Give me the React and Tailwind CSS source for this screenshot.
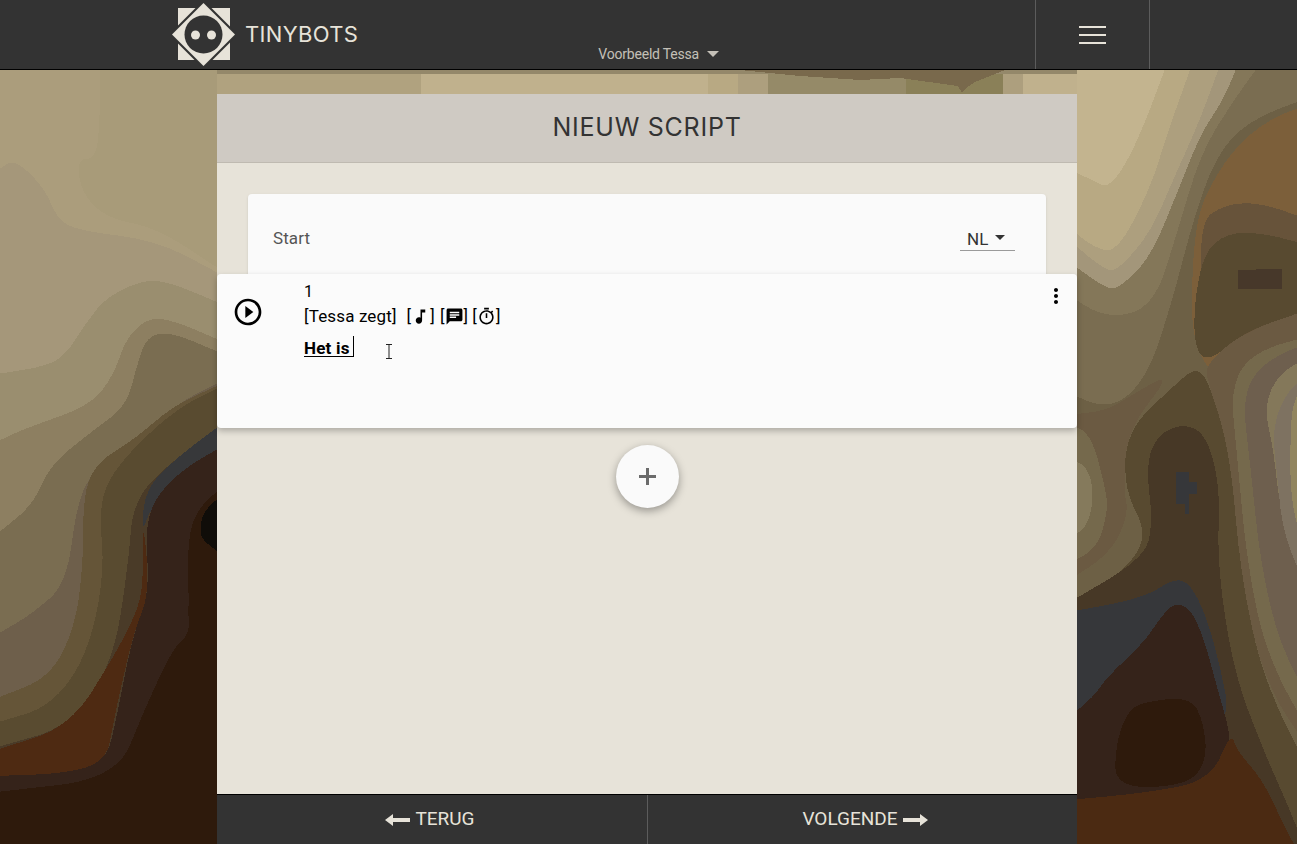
import React from 'react';

const leftLayers = [
    ['#ab9d7c', '0,0 300,0 300,90 290,180 230,180 245,250 320,300 470,320 651,400 651,1568 0,1568'],
    ['#a5977a', '0,200 45,180 135,240 170,300 230,325 470,345 651,410 651,1568 0,1568'],
    ['#9a8e6f', '0,615 140,600 200,575 260,510 320,460 430,425 510,430 651,470 651,1568 0,1568'],
    ['#8d7f61', '0,750 80,725 270,680 340,620 380,540 450,500 530,510 651,545 651,1568 0,1568'],
    ['#7a6d51', '0,935 100,880 150,800 280,730 380,680 410,600 440,540 510,530 651,570 651,1568 0,1568'],
    ['#6e5f4b', '0,1140 100,1100 200,1040 230,880 280,810 400,760 520,680 651,635 651,1568 0,1568'],
    ['#655538', '0,1270 150,1230 225,1130 250,1000 250,850 300,790 400,750 520,680 651,640 651,1568 0,1568'],
    ['#594b30', '0,1320 150,1290 260,1190 315,1020 295,880 350,800 520,690 651,645 651,1568 0,1568'],
    ['#4a3b28', '0,1370 210,1330 340,1200 385,1000 400,870 520,790 651,730 651,1568 0,1568'],
    ['#37383a', '425,940 435,850 530,785 700,700 700,750 530,825 450,890'],
    ['#4e2a12', '0,1375 210,1330 340,1190 410,1100 430,1040 428,900 450,1060 400,1140 340,1320 320,1400 200,1425 0,1430'],
    ['#35231a', '0,1430 200,1425 320,1400 350,1310 400,1140 450,1060 432,900 530,815 700,750 700,1568 0,1568'],
    ['#2e1a0c', '0,1462 350,1435 430,1300 520,1170 570,1140 560,950 600,880 700,830 700,1568 0,1568'],
    ['#35231a', '535,1130 565,1090 570,1140 520,1175'],
    ['#100d09', '598,940 610,890 700,845 700,998 620,960'],
];

const rightLayers = [
    ['#6d6045', '-40,-40 720,-40 720,1640 -40,1640'],
    ['#7c5f3a', '345,320 420,205 520,125 640,80 720,70 720,640 345,640'],
    ['#67533a', '360,310 450,270 560,270 720,310 720,520 390,590'],
    ['#584a30', '355,570 350,480 380,370 450,330 560,330 720,360 720,480 500,530 400,590'],
    ['#47382a', '483,405 615,403 615,443 483,443', true],
    ['#6b5a42', '380,600 500,530 720,480 720,1400 560,1240 490,1020 440,780 400,640'],
    ['#75694c', '460,640 530,570 720,535 720,1370 570,1190 510,1000 480,780'],
    ['#6e5f4e', '495,660 560,590 720,545 720,1300 610,1170 550,1000 520,800'],
    ['#84785a', '560,680 610,610 720,575 720,1080 610,900 590,770'],
    ['#7e7261', '585,720 640,640 720,610 720,1090 620,950 600,820'],
    ['#91855f', '640,700 660,660 720,650 720,1010 640,900'],
    ['#584a30', '-40,1085 100,1040 220,950 140,850 150,730 290,640 360,600 400,640 460,780 490,1020 560,1240 720,1450 720,1640 -40,1640'],
    ['#6b5a42', '-40,700 90,690 160,660 290,610 150,730 140,850 155,900 100,980 -40,1040'],
    ['#75694c', '-40,720 40,730 90,860 90,900 60,970 -40,1005'],
    ['#857a5c', '-40,785 30,800 52,860 30,930 -40,950'],
    ['#473826', '207,800 240,740 320,715 390,740 430,850 420,1000 470,1220 560,1380 640,1500 720,1640 -40,1640 -40,1085 200,990 228,920'],
    ['#36373a', '-40,1100 200,1070 290,1030 340,1040 390,1110 430,1210 462,1320 300,1400 -40,1310'],
    ['#35231a', '-40,1320 50,1270 90,1230 200,1160 250,1110 290,1080 340,1090 380,1150 420,1250 462,1350 450,1380 400,1440 200,1470 -40,1480'],
    ['#2e1a0c', '115,1370 150,1300 200,1280 340,1270 380,1320 390,1400 330,1450 115,1455'],
    ['#4b2a12', '-40,1480 200,1465 400,1440 462,1340 480,1380 560,1440 640,1560 720,1640 -40,1640'],
    ['#7a6d51', '-40,-40 720,-40 720,50 520,100 420,170 350,300 285,470 210,625 100,690 -40,650'],
    ['#847759', '-40,-40 580,-40 470,60 370,170 300,330 230,480 90,505 -40,450'],
    ['#a3967a', '-40,-40 500,-40 440,60 370,130 300,250 220,380 130,440 90,445 -40,380'],
    ['#ad9f7e', '-40,-40 445,-40 370,100 290,220 220,330 130,400 90,410 -40,335'],
    ['#b8a983', '-40,-40 360,-40 270,130 220,240 120,370 50,360 -40,310'],
    ['#c3b48f', '-40,-40 285,-40 180,150 100,240 50,225 -40,195'],
    ['#36373a', '297,815 335,815 335,835 360,835 360,858 335,858 335,900 325,900 325,880 297,880', true],
];

// rounds the outline through the edge midpoints, so contours stay soft;
// points on or past the canvas edge stay sharp so the corners are filled
const smooth = (points, sharp) => {
    const pts = points.trim().split(' ').map((p) => p.split(',').map(Number));
    if (sharp) return `M${pts.map((p) => p.join(' ')).join('L')}Z`;
    const mid = (a, b) => [(a[0] + b[0]) / 2, (a[1] + b[1]) / 2];
    let d = `M${mid(pts[pts.length - 1], pts[0]).join(' ')}`;
    pts.forEach((p, i) => {
        const m = mid(p, pts[(i + 1) % pts.length]);
        const edge = p[0] <= 0 || p[0] >= 651 || p[1] <= 0 || p[1] >= 1568;
        d += edge ? `L${p.join(' ')}L${m.join(' ')}` : `Q${p.join(' ')} ${m.join(' ')}`;
    });
    return d + 'Z';
};

// posterized backdrop behind the panel
const Backdrop = () => (
    <svg className="absolute inset-0 w-full h-full" viewBox="0 0 1297 774" preserveAspectRatio="none" shapeRendering="crispEdges">
        <rect width="1297" height="774" fill="#a89b79" />
        <g transform="scale(0.33333 0.4936)">
            {leftLayers.map(([fill, points, sharp], i) => <path key={i} fill={fill} d={smooth(points, sharp)} />)}
        </g>
        <g transform="translate(1077 0) scale(0.33333 0.4936)">
            {rightLayers.map(([fill, points, sharp], i) => <path key={i} fill={fill} d={smooth(points, sharp)} />)}
        </g>
        <rect x="217" y="0" width="204" height="24" fill="#b0a27f" />
        <rect x="421" y="0" width="287" height="24" fill="#c0b18d" />
        <rect x="708" y="0" width="30" height="24" fill="#b8a983" />
        <rect x="738" y="0" width="30" height="24" fill="#ad9f7e" />
        <rect x="768" y="0" width="138" height="24" fill="#958a68" />
        <rect x="906" y="0" width="97" height="24" fill="#8a8058" />
        <rect x="1003" y="0" width="20" height="24" fill="#ad9f7e" />
        <rect x="1023" y="0" width="54" height="24" fill="#c0b18d" />
        <rect x="217" y="0" width="860" height="4" fill="#94886a" />
        <polygon points="740,0 1005,0 975,12 966,18 962,23 958,16 900,8 860,10 800,6" fill="#79694c" />
    </svg>
);

const Logo = () => (
    <svg width="64" height="64" viewBox="172 3 64 64" className="shrink-0">
        <rect x="178" y="8" width="52" height="52" fill="#e7e3d9" />
        <polygon points="169,34.5 203.5,0 238,34.5 203.5,69" fill="#333333" />
        <polygon points="172,34.5 203.5,3 235,34.5 203.5,66" fill="#e7e3d9" />
        <circle cx="203.5" cy="34.5" r="19" fill="#333333" />
        <circle cx="195.5" cy="35" r="4.5" fill="#e7e3d9" />
        <circle cx="211.5" cy="35" r="4.5" fill="#e7e3d9" />
    </svg>
);

const Icon = ({ d, size = 24, className = '' }) => (
    <svg width={size} height={size} viewBox="0 0 24 24" fill="currentColor" className={className}>
        <path d={d} />
    </svg>
);

const icons = {
    play: 'M10 16.5l6-4.5-6-4.5v9zM12 2C6.48 2 2 6.48 2 12s4.48 10 10 10 10-4.48 10-10S17.52 2 12 2zm0 18c-4.41 0-8-3.59-8-8s3.59-8 8-8 8 3.59 8 8-3.59 8-8 8z',
    music: 'M12 3v10.55c-.59-.34-1.27-.55-2-.55-2.21 0-4 1.79-4 4s1.79 4 4 4 4-1.79 4-4V7h4V3h-6z',
    chat: 'M20 2H4c-1.1 0-1.99.9-1.99 2L2 22l4-4h14c1.1 0 2-.9 2-2V4c0-1.1-.9-2-2-2zM6 9h12v2H6V9zm8 5H6v-2h8v2zm4-6H6V6h12v2z',
    timer: 'M15 1H9v2h6V1zm-4 13h2V8h-2v6zm8.03-6.61l1.42-1.42c-.43-.51-.9-.99-1.41-1.41l-1.42 1.42C16.07 4.74 14.12 4 12 4c-4.97 0-9 4.03-9 9s4.02 9 9 9 9-4.03 9-9c0-2.12-.74-4.07-1.97-5.61zM12 20c-3.87 0-7-3.13-7-7s3.13-7 7-7 7 3.13 7 7-3.13 7-7 7z',
    more: 'M12 8c1.1 0 2-.9 2-2s-.9-2-2-2-2 .9-2 2 .9 2 2 2zm0 2c-1.1 0-2 .9-2 2s.9 2 2 2 2-.9 2-2-.9-2-2-2zm0 6c-1.1 0-2 .9-2 2s.9 2 2 2 2-.9 2-2-.9-2-2-2z',
};

const Arrow = ({ flip }) => (
    <svg width="25" height="14" viewBox="0 0 25 14" fill="#e7e3d9" className={flip ? 'rotate-180' : ''}>
        <polygon points="0,7 8,1 8,5 25,5 25,9 8,9 8,13" />
    </svg>
);

export default function App() {
    return (
        <div className="h-screen flex flex-col overflow-hidden font-['Roboto',sans-serif] bg-[#333333]">
            {/* Header */}
            <header className="h-[70px] shrink-0 bg-[#333333] border-b border-black flex pl-[172px] relative z-10">
                <div className="flex items-center gap-[9px] w-[863px] h-[69px]">
                    <Logo />
                    <span className="font-['Inter',sans-serif] text-[22px] text-[#e7e3d9] tracking-[0.35px]">TINYBOTS</span>
                    <div className="flex items-center gap-[8px] ml-[231px] mt-[38px] text-sm text-[#c4c0b7] tracking-[-0.2px]">
                        <span>Voorbeeld Tessa</span>
                        <span className="w-0 h-0 border-x-[6px] border-x-transparent border-t-[6px] border-t-[#c4c0b7]" />
                    </div>
                </div>
                <div className="w-[115px] h-[69px] border-x border-[#5c5c5c] flex flex-col items-center justify-center gap-[6px]">
                    <span className="w-[27px] h-[2px] bg-[#e7e3d9]" />
                    <span className="w-[27px] h-[2px] bg-[#e7e3d9]" />
                    <span className="w-[27px] h-[2px] bg-[#e7e3d9]" />
                </div>
            </header>

            <main className="relative flex-1 min-h-0 flex pl-[217px] pt-[24px]">
                <Backdrop />
                <div className="relative w-[860px] flex flex-col bg-[#e7e3d9]">
                    <div className="h-[69px] shrink-0 bg-[#cfcac3] border-b border-[#bfbab1] flex items-center justify-center">
                        <h1 className="font-['Inter',sans-serif] text-[25px] text-[#333333] tracking-[0.75px]">NIEUW SCRIPT</h1>
                    </div>

                    <div className="flex-1 px-[31px] pt-[31px]">
                        {/* Start card */}
                        <div className="h-[80px] bg-[#fafafa] rounded-t-[4px] flex justify-between pl-[25px] pr-[31px] pt-[33px] shadow-sm">
                            <span className="text-[#555555] text-[17px] tracking-[0.1px] leading-[22px]">Start</span>
                            <div className="w-[55px] h-[24px] border-b border-[#9a9a9a] flex items-center pl-[7px] gap-[7px]">
                                <span className="text-[#333333] text-[17px] leading-[22px]">NL</span>
                                <span className="w-0 h-0 border-x-[5px] border-x-transparent border-t-[5px] border-t-[#333333] -mt-[3px]" />
                            </div>
                        </div>

                        {/* Expanded step */}
                        <div className="relative -mx-[31px] h-[154px] bg-[#fbfbfb] rounded-[4px] shadow-[0_3px_6px_rgba(0,0,0,0.25)] flex">
                            <div className="w-[87px] shrink-0 pl-[15px] pt-[22px] text-black">
                                <Icon d={icons.play} size={32} />
                            </div>
                            <div className="flex-1 pt-[7px] text-black">
                                <div className="text-base leading-[21px]">1</div>
                                <div className="flex items-center text-[17px] tracking-[0.15px] leading-[26px] h-[28px] whitespace-pre">
                                    <span>[Tessa zegt]</span>
                                    <span className="ml-[10px]">[</span>
                                    <Icon d={icons.music} size={19} />
                                    <span>]</span>
                                    <span className="ml-[5px]">[</span>
                                    <Icon d={icons.chat} size={19} />
                                    <span>]</span>
                                    <span className="ml-[4px]">[</span>
                                    <Icon d={icons.timer} size={19} />
                                    <span>]</span>
                                </div>
                                <div className="mt-[6px] w-[50px] h-[21px] border-b border-r border-black text-[17px] leading-[24px] font-bold tracking-[0.2px] whitespace-nowrap">
                                    Het is
                                </div>
                            </div>
                            <div className="absolute top-[10px] right-[9px] text-black">
                                <Icon d={icons.more} size={24} />
                            </div>
                            {/* text cursor */}
                            <svg width="8" height="15" viewBox="0 0 8 15" className="absolute left-[168px] top-[70px]" fill="none" stroke="#222222">
                                <path d="M1 .5h6M4 .5v14M1 14.5h6" />
                            </svg>
                        </div>

                        <div className="flex justify-center mt-[17px]">
                            <button className="w-[63px] h-[63px] rounded-full bg-[#fafafa] shadow-[0_3px_8px_rgba(0,0,0,0.35)] flex items-center justify-center">
                                <span className="relative w-[17px] h-[17px]">
                                    <span className="absolute left-0 top-[7px] w-[17px] h-[3px] bg-[#6b6b6b]" />
                                    <span className="absolute top-0 left-[7px] h-[17px] w-[3px] bg-[#6b6b6b]" />
                                </span>
                            </button>
                        </div>
                    </div>

                    {/* Footer nav */}
                    <div className="h-[50px] shrink-0 bg-[#333333] border-t border-black grid grid-cols-[431px_1fr] text-[19px] text-[#e7e3d9]">
                        <div className="flex items-center justify-center gap-[5px] border-r border-[#5c5c5c] pr-[4px]">
                            <Arrow />
                            <span>TERUG</span>
                        </div>
                        <div className="flex items-center justify-center gap-[5px] pl-[5px]">
                            <span>VOLGENDE</span>
                            <Arrow flip />
                        </div>
                    </div>
                </div>
            </main>
        </div>
    );
}
